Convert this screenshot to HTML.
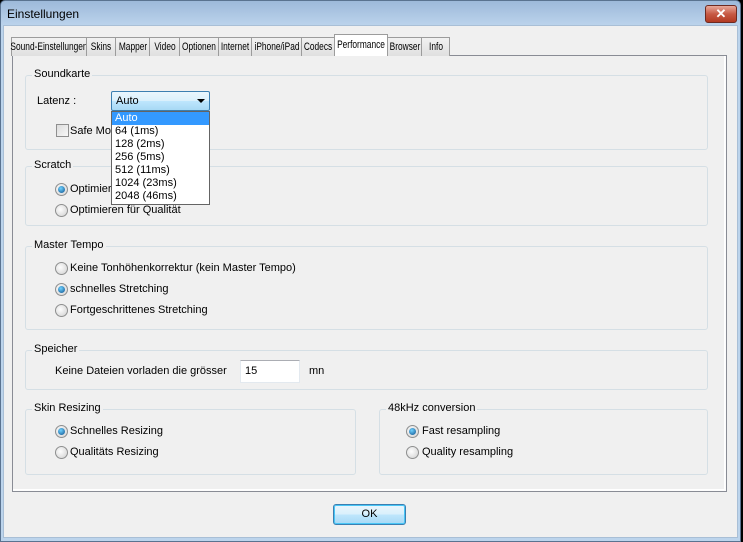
<!DOCTYPE html>
<html><head><style>
*{margin:0;padding:0;box-sizing:border-box}
body{width:743px;height:542px;overflow:hidden;background:#000;font-family:"Liberation Sans",sans-serif;font-size:11px;color:#000;position:relative}
.a{position:absolute}
.win{left:0;top:0;width:741px;height:542px;background:linear-gradient(#9db9da,#bcd4ec 25px,#bcd4ec);border:1px solid #5a7390;border-radius:5px 5px 0 0}
.client{left:3px;top:25px;width:735px;height:513px;background:#f0f0f0;border:1px solid #a9bfd6}
.tab{position:absolute;top:37px;height:19px;border:1px solid #9c9c9c;border-bottom:none;background:linear-gradient(#f2f2f2,#e0e0e0);font-size:11px;white-space:nowrap}
.tab span{position:absolute;left:50%;top:3px;transform:translateX(-50%) scaleX(0.76)}
.tab.sel{top:34px;height:22px;background:#fff;z-index:3}
.tab.sel span{top:4px}
.panel{left:12px;top:55px;width:715px;height:437px;border:1px solid #898c95;background:#fcfcfc}
.panelin{left:13px;top:56px;width:712px;height:434px;background:#f0f0f0;border-right:1px solid #fff;border-bottom:1px solid #fff}
.grp{position:absolute;border:1px solid #d5dfe5;border-radius:3px}
.gl{position:absolute;background:#f0f0f0;padding:0 2px;left:6px;top:-8px}
.r{position:absolute;width:13px;height:13px;border-radius:50%;border:1px solid #8e8f8f;background:radial-gradient(circle at 40% 40%,#fdfdfd,#d0d0d0)}
.r.on::after{content:"";position:absolute;left:2px;top:2px;width:7px;height:7px;border-radius:50%;background:radial-gradient(circle at 40% 35%,#6fd2ff,#0d4f8c)}
.t{position:absolute;white-space:nowrap}
</style></head><body>
<div class="a win"></div>
<div class="t" style="left:7px;top:7px;font-size:12px">Einstellungen</div>
<div class="a" style="left:705px;top:5px;width:32px;height:18px;border:1px solid #6d2a21;border-radius:3px;background:linear-gradient(#e9a99a,#c75a45 50%,#b23a22);color:#fff;font-weight:bold;text-align:center;line-height:16px;font-size:13px">✕</div>
<div class="a client"></div>
<div class="a panel"></div>
<div class="a panelin"></div>
<div class="tab" style="left:11px;width:76px"><span>Sound-Einstellungen</span></div>
<div class="tab" style="left:86px;width:30px"><span>Skins</span></div>
<div class="tab" style="left:115px;width:35px"><span>Mapper</span></div>
<div class="tab" style="left:149px;width:31px"><span>Video</span></div>
<div class="tab" style="left:179px;width:40px"><span>Optionen</span></div>
<div class="tab" style="left:218px;width:34px"><span>Internet</span></div>
<div class="tab" style="left:251px;width:51px"><span>iPhone/iPad</span></div>
<div class="tab" style="left:301px;width:34px"><span>Codecs</span></div>
<div class="tab sel" style="left:334px;width:54px"><span>Performance</span></div>
<div class="tab" style="left:387px;width:35px"><span>Browser</span></div>
<div class="tab" style="left:421px;width:29px"><span>Info</span></div>

<div class="grp" style="left:25px;top:75px;width:683px;height:75px"><span class="gl">Soundkarte</span></div>
<div class="t" style="left:37px;top:95px">Latenz :</div>
<div class="a" style="left:56px;top:124px;width:13px;height:13px;border:1px solid #8f8f8f;background:linear-gradient(135deg,#dcdcdc,#f8f8f8)"></div>
<div class="t" style="left:70px;top:125px">Safe Mo</div>

<div class="grp" style="left:25px;top:166px;width:683px;height:60px"><span class="gl">Scratch</span></div>
<div class="r on" style="left:55px;top:183px"></div><div class="t" style="left:70px;top:183px">Optimieren</div>
<div class="r" style="left:55px;top:204px"></div><div class="t" style="left:70px;top:204px">Optimieren für Qualität</div>

<div class="grp" style="left:25px;top:246px;width:683px;height:84px"><span class="gl">Master Tempo</span></div>
<div class="r" style="left:55px;top:262px"></div><div class="t" style="left:70px;top:262px">Keine Tonhöhenkorrektur (kein Master Tempo)</div>
<div class="r on" style="left:55px;top:283px"></div><div class="t" style="left:70px;top:283px">schnelles Stretching</div>
<div class="r" style="left:55px;top:304px"></div><div class="t" style="left:70px;top:304px">Fortgeschrittenes Stretching</div>

<div class="grp" style="left:25px;top:350px;width:683px;height:40px"><span class="gl">Speicher</span></div>
<div class="t" style="left:55px;top:365px">Keine Dateien vorladen die grösser</div>
<div class="a" style="left:240px;top:360px;width:60px;height:23px;background:#fff;border:1px solid #e3e9ef;border-top-color:#abadb3;padding:4px 0 0 4px">15</div>
<div class="t" style="left:309px;top:365px">mn</div>

<div class="grp" style="left:25px;top:409px;width:331px;height:66px"><span class="gl">Skin Resizing</span></div>
<div class="r on" style="left:55px;top:425px"></div><div class="t" style="left:70px;top:425px">Schnelles Resizing</div>
<div class="r" style="left:55px;top:446px"></div><div class="t" style="left:70px;top:446px">Qualitäts Resizing</div>

<div class="grp" style="left:379px;top:409px;width:329px;height:66px"><span class="gl">48kHz conversion</span></div>
<div class="r on" style="left:406px;top:425px"></div><div class="t" style="left:422px;top:425px">Fast resampling</div>
<div class="r" style="left:406px;top:446px"></div><div class="t" style="left:422px;top:446px">Quality resampling</div>

<div class="a" style="left:333px;top:504px;width:73px;height:21px;border:1px solid #3c7fb1;border-radius:3px;background:linear-gradient(#eaf6fd,#d9f0fc 50%,#bee6fd 51%,#a7d9f5);text-align:center;line-height:19px;box-shadow:inset 0 0 0 1px #48c6f6">OK</div>

<div class="a" style="left:111px;top:91px;width:99px;height:20px;border:1px solid #3c7fb1;border-radius:2px;background:linear-gradient(#eaf6fd,#d9f0fc 50%,#bee6fd 51%,#a7d9f5);padding:3px 0 0 4px">Auto<span style="position:absolute;right:4px;top:7px;width:0;height:0;border-left:4px solid transparent;border-right:4px solid transparent;border-top:4px solid #000"></span></div>
<div class="a" style="left:111px;top:111px;width:99px;height:94px;background:#fff;border:1px solid #646464;z-index:5">
<div style="background:#3399ff;color:#fff;height:13px;line-height:13px;padding-left:3px">Auto</div>
<div style="line-height:13px;padding-left:3px">64 (1ms)<br>128 (2ms)<br>256 (5ms)<br>512 (11ms)<br>1024 (23ms)<br>2048 (46ms)</div>
</div>
</body></html>
